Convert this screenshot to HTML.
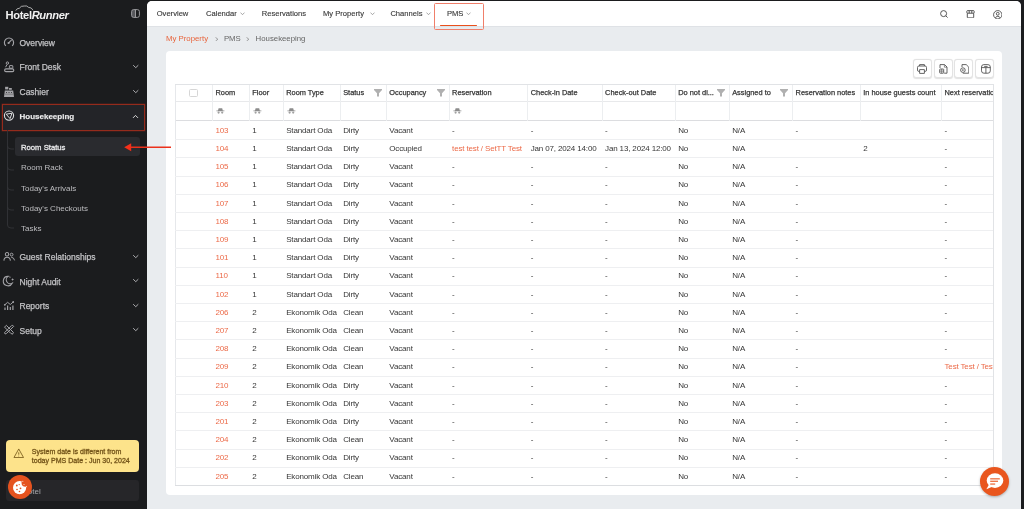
<!DOCTYPE html>
<html><head><meta charset="utf-8">
<style>
*{margin:0;padding:0;box-sizing:border-box}
html,body{width:1024px;height:509px;overflow:hidden;background:#1b1c1e;font-family:"Liberation Sans",sans-serif}
.abs{position:absolute}
body>*{will-change:transform}
#side{position:absolute;left:0;top:0;width:147px;height:509px;background:#1b1c1e}
#main{position:absolute;left:147px;top:1px;width:874px;height:520px;background:#e9ecef;border-radius:5px 5px 0 0;overflow:hidden}
#hdr{position:absolute;left:0;top:0;width:874px;height:25.5px;background:#fff;border-bottom:1px solid #dfe2e6}
.nav{position:absolute;top:7.5px;font-size:7.6px;color:#383838;-webkit-text-stroke:0.12px #383838;white-space:nowrap}
.chev{display:inline-block;width:3.2px;height:3.2px;border-right:0.6px solid #999;border-bottom:0.6px solid #999;transform:rotate(45deg);margin-left:4.5px;position:relative;top:-2px}
.bc{position:absolute;top:33px;font-size:7.8px;color:#666;white-space:nowrap}
#card{position:absolute;left:19px;top:50px;width:836px;height:444px;background:#fff;border-radius:4px}
.tb{position:absolute;top:8px;width:19px;height:18.5px;border:1px solid #e3e3e3;border-radius:3px;background:#fff;box-shadow:0 0.5px 1px rgba(0,0,0,.12)}
#tbl{position:absolute;left:174.8px;top:83.5px;width:819.2px;height:401.9px;overflow:hidden;background:#fff;border-top:1px solid #e1e3e6;border-right:1px solid #e1e3e6}
#tbl .hrow{position:absolute;left:0;top:0;width:100%;height:17.2px;border-bottom:1px solid #e8e9eb}
#tbl .frow{position:absolute;left:0;top:17.7px;width:100%;height:18.7px;border-bottom:1px solid #dcdde0}
#tbl .vl{position:absolute;top:0;width:1px;height:36.4px;background:#eceef0}
#tbl .vl.full{height:100%;background:#e6e8eb}
#tbl .c{position:absolute;white-space:nowrap;font-size:8px;letter-spacing:-0.15px;color:#363636}
#tbl .h{top:2.8px;color:#353535;font-size:7.4px;-webkit-text-stroke:0.25px #353535;letter-spacing:0}
#tbl .r{position:absolute;left:0;width:100%;border-bottom:1px solid #eeeff1}
#tbl .r .c{top:3.8px}
#tbl .r1 .c{top:4.6px}
#tbl .rl{border-bottom-color:#dcdee1}
.o{color:#ec6a48}
.fi{position:absolute;top:4.2px;width:8px;height:7.5px}
.eye{position:absolute;top:23.4px}
.cb{position:absolute;left:14.3px;top:3.8px;width:9px;height:8.5px;border:0.8px solid #d6d6d6;border-radius:1.5px}
.si{position:absolute;left:19.5px;font-size:8.5px;color:#c2c2c5;-webkit-text-stroke:0.25px #c2c2c5;white-space:nowrap}
.sic{position:absolute;left:4px;width:11px;height:11px}
.sch{position:absolute;left:133px;width:4px;height:4px;border-right:1px solid #bbb;border-bottom:1px solid #bbb;transform:rotate(45deg)}
.sub{position:absolute;left:21px;font-size:8px;color:#bdbdc0;white-space:nowrap}
</style></head><body>
<div id="side">
  <!-- logo -->
  <div class="abs" style="left:5.6px;top:9px;font-size:11.2px;font-weight:bold;color:#f2f2f2;letter-spacing:-0.38px;white-space:nowrap">Hotel<i>Runner</i></div>
  <svg class="abs" style="left:14.5px;top:5px" width="20" height="6" viewBox="0 0 20 6"><path d="M0.8 5.6Q1.8 3.2 4.3 3.3Q5.8 0.6 9.3 1Q12 0.3 13.6 2.4Q16.6 2.2 18 5.2" fill="none" stroke="#d8d8d8" stroke-width="0.75"/></svg>
  <!-- collapse icon -->
  <svg class="abs" style="left:131px;top:9px" width="9" height="9" viewBox="0 0 9 9"><path d="M4.5 0.6H2.6Q0.6 0.6 0.6 2.6V6.4Q0.6 8.4 2.6 8.4H4.5Z" fill="#56575b"/><rect x="0.6" y="0.6" width="7.8" height="7.8" rx="2" fill="none" stroke="#9a9a9d" stroke-width="1"/><line x1="4.5" y1="0.6" x2="4.5" y2="8.4" stroke="#9a9a9d" stroke-width="1"/></svg>

  <div class="si" style="top:37.5px">Overview</div>
  <svg class="abs" style="left:0;top:34px" width="20" height="20" viewBox="0 0 20 20"><path d="M5.8 11.9A4.6 4.6 0 1 1 12.2 11.9" fill="none" stroke="#a3a3a7" stroke-width="1.15"/><path d="M8.7 8.9L11.6 5.9" stroke="#a3a3a7" stroke-width="1.1"/><circle cx="8.6" cy="9" r="1.1" fill="#a3a3a7"/></svg>

  <div class="si" style="top:62.2px">Front Desk</div>
  <svg class="abs" style="left:0;top:58px" width="20" height="20" viewBox="0 0 20 20"><circle cx="7.4" cy="5.1" r="1.2" fill="none" stroke="#a3a3a7" stroke-width="1"/><path d="M7 6.6L5.6 9.2" stroke="#a3a3a7" stroke-width="1"/><rect x="9.4" y="7.6" width="3.4" height="2.6" rx="0.4" fill="none" stroke="#a3a3a7" stroke-width="1"/><rect x="4.6" y="10.9" width="9.2" height="2.7" rx="1.35" fill="none" stroke="#a3a3a7" stroke-width="1.1"/></svg>
  <svg class="abs" style="left:132px;top:63.8px" width="8" height="5" viewBox="0 0 8 5"><path d="M1.2 1.2L3.75 3.7L6.3 1.2" fill="none" stroke="#b5b5b8" stroke-width="0.95"/></svg>

  <div class="si" style="top:86.9px">Cashier</div>
  <svg class="abs" style="left:0;top:82px" width="20" height="20" viewBox="0 0 20 20"><rect x="5.1" y="4.8" width="3.2" height="2.6" fill="#a3a3a7"/><rect x="9" y="6" width="2.8" height="1.8" fill="#a3a3a7"/><path d="M4.8 8.6H13.2L14 15H4z" fill="#a3a3a7"/><circle cx="6.5" cy="10.4" r="0.5" fill="#1c1c1f"/><circle cx="9" cy="10.4" r="0.5" fill="#1c1c1f"/><circle cx="11.5" cy="10.4" r="0.5" fill="#1c1c1f"/><path d="M5 12.2H13" stroke="#555" stroke-width="0.5"/></svg>
  <svg class="abs" style="left:132px;top:88.8px" width="8" height="5" viewBox="0 0 8 5"><path d="M1.2 1.2L3.75 3.7L6.3 1.2" fill="none" stroke="#b5b5b8" stroke-width="0.95"/></svg>

  <!-- housekeeping highlighted -->
  <div class="abs" style="left:2px;top:104px;width:143px;height:27px;border:1px solid #952b1c;box-shadow:0 0 0 0.4px rgba(149,43,28,.55);background:#232428;border-radius:0"></div>
  <div class="si" style="top:111.5px;color:#fafafa;font-weight:bold;font-size:8px">Housekeeping</div>
  <svg class="abs" style="left:0;top:106px" width="20" height="20" viewBox="0 0 20 20"><circle cx="9" cy="9.6" r="4.6" fill="none" stroke="#dcdcde" stroke-width="1.1"/><path d="M6.2 8.2L12 7.2L10 12.6Z" fill="none" stroke="#dcdcde" stroke-width="1"/></svg>
  <svg class="abs" style="left:132px;top:113.5px" width="8" height="5" viewBox="0 0 8 5"><path d="M1 3.9L3.5 1.4L6 3.9" fill="none" stroke="#e0e0e0" stroke-width="0.95"/></svg>

  <!-- tree line -->
  <svg class="abs" style="left:0;top:130px" width="20" height="100" viewBox="0 0 20 100"><path d="M7.5 0V95Q7.5 98 11 98H14M7.5 16Q7.5 19 11 19H14M7.5 37Q7.5 40 11 40H14M7.5 57Q7.5 60 11 60H14M7.5 77Q7.5 80 11 80H14" fill="none" stroke="#333438" stroke-width="0.9"/></svg>
  <div class="abs" style="left:14.7px;top:137.1px;width:125.3px;height:19px;background:#2a2b2f;border-radius:3px"></div>
  <div class="sub" style="top:143px;color:#e6e6e8;font-size:7.7px;-webkit-text-stroke:0.32px #e6e6e8">Room Status</div>
  <div class="sub" style="top:163.4px">Room Rack</div>
  <div class="sub" style="top:183.5px">Today's Arrivals</div>
  <div class="sub" style="top:203.6px">Today's Checkouts</div>
  <div class="sub" style="top:224.1px">Tasks</div>

  <div class="si" style="top:252.2px">Guest Relationships</div>
  <svg class="abs" style="left:0;top:246px" width="20" height="20" viewBox="0 0 20 20"><circle cx="7" cy="8.2" r="1.7" fill="none" stroke="#a3a3a7" stroke-width="1.05"/><circle cx="11.6" cy="8.6" r="1.4" fill="none" stroke="#a3a3a7" stroke-width="1"/><path d="M3.9 14.6Q4.1 11.3 7.1 11.3Q10.1 11.3 10.4 14.6" fill="none" stroke="#a3a3a7" stroke-width="1.1"/><path d="M11.2 11.2Q14 11.4 14.6 14.4" fill="none" stroke="#a3a3a7" stroke-width="1"/></svg>
  <svg class="abs" style="left:132px;top:253.8px" width="8" height="5" viewBox="0 0 8 5"><path d="M1.2 1.2L3.75 3.7L6.3 1.2" fill="none" stroke="#b5b5b8" stroke-width="0.95"/></svg>

  <div class="si" style="top:277px">Night Audit</div>
  <svg class="abs" style="left:0;top:271px" width="20" height="20" viewBox="0 0 20 20"><path d="M8.2 5.4A4.7 4.7 0 1 0 12.2 12.2A3.9 3.9 0 0 1 8.2 5.4Z" fill="none" stroke="#a3a3a7" stroke-width="1.1"/><path d="M12.6 7L13 8.1L14.1 8.5L13 8.9L12.6 10L12.2 8.9L11.1 8.5L12.2 8.1Z" fill="#a3a3a7"/><circle cx="10" cy="6.2" r="0.6" fill="#a3a3a7"/></svg>
  <svg class="abs" style="left:132px;top:278.3px" width="8" height="5" viewBox="0 0 8 5"><path d="M1.2 1.2L3.75 3.7L6.3 1.2" fill="none" stroke="#b5b5b8" stroke-width="0.95"/></svg>

  <div class="si" style="top:301.3px">Reports</div>
  <svg class="abs" style="left:0;top:296px" width="20" height="20" viewBox="0 0 20 20"><path d="M4.8 8.8L7.6 6.3L10.3 8.5L13.2 6" fill="none" stroke="#a3a3a7" stroke-width="1"/><circle cx="4.8" cy="8.8" r="0.9" fill="#a3a3a7"/><circle cx="13.2" cy="6" r="0.9" fill="#a3a3a7"/><path d="M5 11.5V14M7.6 9.6V14M10.3 11V14M12.9 9.6V14" stroke="#a3a3a7" stroke-width="1.2"/></svg>
  <svg class="abs" style="left:132px;top:302.8px" width="8" height="5" viewBox="0 0 8 5"><path d="M1.2 1.2L3.75 3.7L6.3 1.2" fill="none" stroke="#b5b5b8" stroke-width="0.95"/></svg>

  <div class="si" style="top:326.1px">Setup</div>
  <svg class="abs" style="left:0;top:320px" width="20" height="20" viewBox="0 0 20 20"><path d="M5.4 6.2L6.3 5.3L13.4 12.4L12.5 14.2L10.7 13.3L4.5 7.1Z" fill="none" stroke="#a3a3a7" stroke-width="1"/><path d="M12.8 5.4L13.7 6.3L6.6 13.4L5.2 14L4.6 12.6L11.8 5.4Z" fill="none" stroke="#a3a3a7" stroke-width="1"/></svg>
  <svg class="abs" style="left:132px;top:327.3px" width="8" height="5" viewBox="0 0 8 5"><path d="M1.2 1.2L3.75 3.7L6.3 1.2" fill="none" stroke="#b5b5b8" stroke-width="0.95"/></svg>

  <!-- warning -->
  <div class="abs" style="left:5.9px;top:440.1px;width:132.8px;height:31.5px;background:#fde38b;border-radius:4px"></div>
  <svg class="abs" style="left:13px;top:447.5px" width="11.5" height="10.5" viewBox="0 0 12 11"><path d="M6 1L11 10H1z" fill="none" stroke="#7a5c1c" stroke-width="0.9" stroke-linejoin="round"/><path d="M6 4.5v2.5" stroke="#7a5c1c" stroke-width="0.9"/><circle cx="6" cy="8.4" r="0.5" fill="#7a5c1c"/></svg>
  <div class="abs" style="left:31.8px;top:448px;font-size:7.05px;color:#74551a;-webkit-text-stroke:0.3px #74551a;line-height:8.6px;white-space:nowrap">System date is different from<br>today PMS Date : Jun 30, 2024</div>

  <!-- bottom hotel box -->
  <div class="abs" style="left:5.9px;top:480px;width:132.8px;height:21.4px;background:#262629;border-radius:3px"></div>
  <div class="abs" style="left:22px;top:487px;font-size:8px;color:#a9a9ac">Hotel</div>
  <div class="abs" style="left:8.1px;top:475px;width:24px;height:24px;border-radius:50%;background:#e5531f"></div>
  <svg class="abs" style="left:12px;top:480px" width="16" height="16" viewBox="0 0 16 16"><defs><mask id="bite"><rect width="16" height="16" fill="#fff"/><circle cx="13.5" cy="2.8" r="4" fill="#000"/></mask></defs><circle cx="7.6" cy="7.6" r="6.6" fill="#fff" mask="url(#bite)"/><circle cx="4.8" cy="5.5" r="0.9" fill="#e5531f"/><circle cx="7.2" cy="4.6" r="0.7" fill="#e5531f"/><circle cx="8.5" cy="8.3" r="0.9" fill="#e5531f"/><circle cx="5" cy="9.5" r="0.8" fill="#e5531f"/><circle cx="7.5" cy="11.5" r="0.8" fill="#e5531f"/><circle cx="10.8" cy="1.2" r="0.5" fill="#fff"/><circle cx="12" cy="4.4" r="0.5" fill="#fff"/><circle cx="14.3" cy="6.5" r="0.5" fill="#fff"/></svg>
</div>

<div id="main">
  <div id="hdr">
    <div class="nav" style="left:9.7px">Overview</div>
    <div class="nav" style="left:59px">Calendar</div>
    <div class="nav" style="left:114.8px">Reservations</div>
    <div class="nav" style="left:176px">My Property</div>
    <div class="nav" style="left:243.4px">Channels</div>
    <div class="abs" style="left:287.4px;top:1.9px;width:49.4px;height:27.6px;border:1px solid #f07f6a;border-radius:1.5px"></div>
    <div class="nav" style="left:299.9px">PMS</div>
    <div class="abs" style="left:293px;top:23.7px;width:36.6px;height:1.5px;background:#e9501c;border-radius:1px"></div>
    <svg class="abs" style="left:93.3px;top:10.9px" width="5" height="3.5" viewBox="0 0 5 3.5"><path d="M0.5 0.6L2.5 2.7L4.5 0.6" stroke="#8a8a8a" stroke-width="0.75" fill="none"/></svg>
    <svg class="abs" style="left:222.6px;top:10.9px" width="5" height="3.5" viewBox="0 0 5 3.5"><path d="M0.5 0.6L2.5 2.7L4.5 0.6" stroke="#8a8a8a" stroke-width="0.75" fill="none"/></svg>
    <svg class="abs" style="left:279px;top:10.9px" width="5" height="3.5" viewBox="0 0 5 3.5"><path d="M0.5 0.6L2.5 2.7L4.5 0.6" stroke="#8a8a8a" stroke-width="0.75" fill="none"/></svg>
    <svg class="abs" style="left:319.4px;top:10.9px" width="5" height="3.5" viewBox="0 0 5 3.5"><path d="M0.5 0.6L2.5 2.7L4.5 0.6" stroke="#8a8a8a" stroke-width="0.75" fill="none"/></svg>
    <!-- right icons -->
    <svg class="abs" style="left:792.5px;top:9px" width="8" height="8" viewBox="0 0 8 8"><circle cx="3.6" cy="3.6" r="3" fill="none" stroke="#444" stroke-width="0.9"/><path d="M5.8 5.8L7.6 7.6" stroke="#444" stroke-width="0.9"/></svg>
    <svg class="abs" style="left:819px;top:8.8px" width="9" height="8.5" viewBox="0 0 9 8.5"><rect x="0.8" y="0.6" width="7.4" height="2.6" rx="0.8" fill="none" stroke="#444" stroke-width="0.9"/><path d="M1.3 3.2V7.2Q1.3 7.9 2 7.9H7Q7.7 7.9 7.7 7.2V3.2M3.2 1v2.2M5.8 1v2.2" fill="none" stroke="#444" stroke-width="0.9"/></svg>
    <svg class="abs" style="left:845.8px;top:8.6px" width="9.5" height="9.5" viewBox="0 0 10 10"><circle cx="5" cy="5" r="4.4" fill="none" stroke="#444" stroke-width="0.9"/><circle cx="5" cy="4" r="1.5" fill="none" stroke="#444" stroke-width="0.9"/><path d="M2.6 8.3Q3 6.7 5 6.7T7.4 8.3" fill="none" stroke="#444" stroke-width="0.9"/></svg>
  </div>
  <div class="bc" style="left:19px;color:#e8643c">My Property</div>
  <svg class="abs" style="left:67.6px;top:35.8px" width="3.5" height="4.5" viewBox="0 0 3.5 4.5"><path d="M0.5 0.4L2.9 2.25L0.5 4.1" stroke="#8c8c8c" stroke-width="0.8" fill="none"/></svg>
  <div class="bc" style="left:76.9px">PMS</div>
  <svg class="abs" style="left:99px;top:35.8px" width="3.5" height="4.5" viewBox="0 0 3.5 4.5"><path d="M0.5 0.4L2.9 2.25L0.5 4.1" stroke="#8c8c8c" stroke-width="0.8" fill="none"/></svg>
  <div class="bc" style="left:108.6px">Housekeeping</div>
  <div id="card">
    <div class="tb" style="left:746.8px"><svg class="abs" style="left:3.6px;top:3.6px" width="10" height="10" viewBox="0 0 10 10"><path d="M2.6 2V0.6h4.8V2" fill="none" stroke="#4a4a4a" stroke-width="0.85"/><path d="M2.4 7.4H1.8Q0.5 7.4 0.5 6.1V3.4Q0.5 2 1.9 2H8.1Q9.5 2 9.5 3.4V6.1Q9.5 7.4 8.2 7.4H7.6" fill="none" stroke="#4a4a4a" stroke-width="0.85"/><path d="M2.6 5.6h4.8v3.8h-4.8z" fill="none" stroke="#4a4a4a" stroke-width="0.85"/></svg></div>
    <div class="tb" style="left:767.6px"><svg class="abs" style="left:4.3px;top:4px" width="9" height="10" viewBox="0 0 9 10"><path d="M1 4V0.6h4.6L8 3V9.2H5.2" fill="none" stroke="#4a4a4a" stroke-width="0.85"/><path d="M5.4 0.8V3.2H8" fill="none" stroke="#4a4a4a" stroke-width="0.6"/><rect x="0.7" y="5" width="4" height="4.2" rx="0.6" fill="none" stroke="#4a4a4a" stroke-width="0.85"/><path d="M2.7 5v4.2M0.7 7.1h4" stroke="#4a4a4a" stroke-width="0.6"/></svg></div>
    <div class="tb" style="left:788.3px"><svg class="abs" style="left:4.4px;top:4px" width="9.5" height="10" viewBox="0 0 9.5 10"><path d="M2 3V0.6h4.2L8.8 3.2V9.2H2.8" fill="none" stroke="#4a4a4a" stroke-width="0.85"/><circle cx="2.9" cy="6.1" r="2.3" fill="#fff" stroke="#4a4a4a" stroke-width="0.85"/><circle cx="2.9" cy="6.1" r="0.8" fill="#4a4a4a"/></svg></div>
    <div class="tb" style="left:809.3px"><svg class="abs" style="left:4.3px;top:4px" width="10" height="10" viewBox="0 0 10 10"><rect x="0.5" y="0.6" width="8.8" height="8.6" rx="2.4" fill="none" stroke="#4a4a4a" stroke-width="0.85"/><path d="M0.5 3.6h8.8M4.9 3.6v5.6M3.2 2.4h3.4" fill="none" stroke="#4a4a4a" stroke-width="0.85"/></svg></div>
  </div>
</div>

<div id="tbl">
  <div class="hrow"></div>
  <div class="frow"></div>
  <div class="vl full" style="left:0.0px"></div><div class="vl" style="left:37.0px"></div><div class="vl" style="left:73.8px"></div><div class="vl" style="left:107.7px"></div><div class="vl" style="left:164.7px"></div><div class="vl" style="left:210.8px"></div><div class="vl" style="left:273.6px"></div><div class="vl" style="left:352.2px"></div><div class="vl" style="left:426.6px"></div><div class="vl" style="left:499.7px"></div><div class="vl" style="left:553.7px"></div><div class="vl" style="left:617.1px"></div><div class="vl" style="left:684.7px"></div><div class="vl" style="left:766.0px"></div>
  <div class="cb"></div>
  <div class="c h" style="left:40.5px">Room</div><div class="c h" style="left:77.3px">Floor</div><div class="c h" style="left:111.2px">Room Type</div><div class="c h" style="left:168.2px">Status</div><svg class="fi" style="left:198.8px" viewBox="0 0 8 7.5"><path d="M0 0H8V1L5 4.2V7.5H3V4.2L0 1Z" fill="#b0b0b0"/></svg><div class="c h" style="left:214.3px">Occupancy</div><svg class="fi" style="left:261.6px" viewBox="0 0 8 7.5"><path d="M0 0H8V1L5 4.2V7.5H3V4.2L0 1Z" fill="#b0b0b0"/></svg><div class="c h" style="left:277.1px">Reservation</div><div class="c h" style="left:355.7px">Check-in Date</div><div class="c h" style="left:430.1px">Check-out Date</div><div class="c h" style="left:503.2px">Do not di...</div><svg class="fi" style="left:541.7px" viewBox="0 0 8 7.5"><path d="M0 0H8V1L5 4.2V7.5H3V4.2L0 1Z" fill="#b0b0b0"/></svg><div class="c h" style="left:557.2px">Assigned to</div><svg class="fi" style="left:605.1px" viewBox="0 0 8 7.5"><path d="M0 0H8V1L5 4.2V7.5H3V4.2L0 1Z" fill="#b0b0b0"/></svg><div class="c h" style="left:620.6px">Reservation notes</div><div class="c h" style="left:688.2px">In house guests count</div><div class="c h" style="left:769.5px">Next reservatio</div>
  <div class="eye" style="left:41.2px"><svg style="display:block" width="9" height="6" viewBox="0 0 9 6"><path d="M2.6 0.3H6.2L6.8 2.4H8.4V3.2H0.4V2.4H2Z" fill="#8c8c8c"/><circle cx="2.6" cy="4.6" r="1.1" fill="#a0a0a0"/><circle cx="6.2" cy="4.6" r="1.1" fill="#a0a0a0"/></svg></div><div class="eye" style="left:78.0px"><svg style="display:block" width="9" height="6" viewBox="0 0 9 6"><path d="M2.6 0.3H6.2L6.8 2.4H8.4V3.2H0.4V2.4H2Z" fill="#8c8c8c"/><circle cx="2.6" cy="4.6" r="1.1" fill="#a0a0a0"/><circle cx="6.2" cy="4.6" r="1.1" fill="#a0a0a0"/></svg></div><div class="eye" style="left:111.9px"><svg style="display:block" width="9" height="6" viewBox="0 0 9 6"><path d="M2.6 0.3H6.2L6.8 2.4H8.4V3.2H0.4V2.4H2Z" fill="#8c8c8c"/><circle cx="2.6" cy="4.6" r="1.1" fill="#a0a0a0"/><circle cx="6.2" cy="4.6" r="1.1" fill="#a0a0a0"/></svg></div><div class="eye" style="left:277.8px"><svg style="display:block" width="9" height="6" viewBox="0 0 9 6"><path d="M2.6 0.3H6.2L6.8 2.4H8.4V3.2H0.4V2.4H2Z" fill="#8c8c8c"/><circle cx="2.6" cy="4.6" r="1.1" fill="#a0a0a0"/><circle cx="6.2" cy="4.6" r="1.1" fill="#a0a0a0"/></svg></div>
  <div class="r r1" style="top:36.20px;height:19.00px"><div class="c " style="left:40.5px"><span class="o">103</span></div><div class="c " style="left:77.3px">1</div><div class="c " style="left:111.2px">Standart Oda</div><div class="c " style="left:168.2px">Dirty</div><div class="c " style="left:214.3px">Vacant</div><div class="c " style="left:277.1px">-</div><div class="c " style="left:355.7px">-</div><div class="c " style="left:430.1px">-</div><div class="c " style="left:503.2px">No</div><div class="c " style="left:557.2px">N/A</div><div class="c " style="left:620.6px">-</div><div class="c " style="left:769.5px">-</div></div><div class="r" style="top:55.20px;height:18.21px"><div class="c " style="left:40.5px"><span class="o">104</span></div><div class="c " style="left:77.3px">1</div><div class="c " style="left:111.2px">Standart Oda</div><div class="c " style="left:168.2px">Dirty</div><div class="c " style="left:214.3px">Occupied</div><div class="c " style="left:277.1px"><span class="o">test test / SetTT Test</span></div><div class="c " style="left:355.7px">Jan 07, 2024 14:00</div><div class="c " style="left:430.1px">Jan 13, 2024 12:00</div><div class="c " style="left:503.2px">No</div><div class="c " style="left:557.2px">N/A</div><div class="c " style="left:688.2px">2</div><div class="c " style="left:769.5px">-</div></div><div class="r" style="top:73.41px;height:18.21px"><div class="c " style="left:40.5px"><span class="o">105</span></div><div class="c " style="left:77.3px">1</div><div class="c " style="left:111.2px">Standart Oda</div><div class="c " style="left:168.2px">Dirty</div><div class="c " style="left:214.3px">Vacant</div><div class="c " style="left:277.1px">-</div><div class="c " style="left:355.7px">-</div><div class="c " style="left:430.1px">-</div><div class="c " style="left:503.2px">No</div><div class="c " style="left:557.2px">N/A</div><div class="c " style="left:620.6px">-</div><div class="c " style="left:769.5px">-</div></div><div class="r" style="top:91.61px;height:18.21px"><div class="c " style="left:40.5px"><span class="o">106</span></div><div class="c " style="left:77.3px">1</div><div class="c " style="left:111.2px">Standart Oda</div><div class="c " style="left:168.2px">Dirty</div><div class="c " style="left:214.3px">Vacant</div><div class="c " style="left:277.1px">-</div><div class="c " style="left:355.7px">-</div><div class="c " style="left:430.1px">-</div><div class="c " style="left:503.2px">No</div><div class="c " style="left:557.2px">N/A</div><div class="c " style="left:620.6px">-</div><div class="c " style="left:769.5px">-</div></div><div class="r" style="top:109.82px;height:18.21px"><div class="c " style="left:40.5px"><span class="o">107</span></div><div class="c " style="left:77.3px">1</div><div class="c " style="left:111.2px">Standart Oda</div><div class="c " style="left:168.2px">Dirty</div><div class="c " style="left:214.3px">Vacant</div><div class="c " style="left:277.1px">-</div><div class="c " style="left:355.7px">-</div><div class="c " style="left:430.1px">-</div><div class="c " style="left:503.2px">No</div><div class="c " style="left:557.2px">N/A</div><div class="c " style="left:620.6px">-</div><div class="c " style="left:769.5px">-</div></div><div class="r" style="top:128.02px;height:18.21px"><div class="c " style="left:40.5px"><span class="o">108</span></div><div class="c " style="left:77.3px">1</div><div class="c " style="left:111.2px">Standart Oda</div><div class="c " style="left:168.2px">Dirty</div><div class="c " style="left:214.3px">Vacant</div><div class="c " style="left:277.1px">-</div><div class="c " style="left:355.7px">-</div><div class="c " style="left:430.1px">-</div><div class="c " style="left:503.2px">No</div><div class="c " style="left:557.2px">N/A</div><div class="c " style="left:620.6px">-</div><div class="c " style="left:769.5px">-</div></div><div class="r" style="top:146.23px;height:18.21px"><div class="c " style="left:40.5px"><span class="o">109</span></div><div class="c " style="left:77.3px">1</div><div class="c " style="left:111.2px">Standart Oda</div><div class="c " style="left:168.2px">Dirty</div><div class="c " style="left:214.3px">Vacant</div><div class="c " style="left:277.1px">-</div><div class="c " style="left:355.7px">-</div><div class="c " style="left:430.1px">-</div><div class="c " style="left:503.2px">No</div><div class="c " style="left:557.2px">N/A</div><div class="c " style="left:620.6px">-</div><div class="c " style="left:769.5px">-</div></div><div class="r" style="top:164.44px;height:18.21px"><div class="c " style="left:40.5px"><span class="o">101</span></div><div class="c " style="left:77.3px">1</div><div class="c " style="left:111.2px">Standart Oda</div><div class="c " style="left:168.2px">Dirty</div><div class="c " style="left:214.3px">Vacant</div><div class="c " style="left:277.1px">-</div><div class="c " style="left:355.7px">-</div><div class="c " style="left:430.1px">-</div><div class="c " style="left:503.2px">No</div><div class="c " style="left:557.2px">N/A</div><div class="c " style="left:620.6px">-</div><div class="c " style="left:769.5px">-</div></div><div class="r" style="top:182.64px;height:18.21px"><div class="c " style="left:40.5px"><span class="o">110</span></div><div class="c " style="left:77.3px">1</div><div class="c " style="left:111.2px">Standart Oda</div><div class="c " style="left:168.2px">Dirty</div><div class="c " style="left:214.3px">Vacant</div><div class="c " style="left:277.1px">-</div><div class="c " style="left:355.7px">-</div><div class="c " style="left:430.1px">-</div><div class="c " style="left:503.2px">No</div><div class="c " style="left:557.2px">N/A</div><div class="c " style="left:620.6px">-</div><div class="c " style="left:769.5px">-</div></div><div class="r" style="top:200.85px;height:18.21px"><div class="c " style="left:40.5px"><span class="o">102</span></div><div class="c " style="left:77.3px">1</div><div class="c " style="left:111.2px">Standart Oda</div><div class="c " style="left:168.2px">Dirty</div><div class="c " style="left:214.3px">Vacant</div><div class="c " style="left:277.1px">-</div><div class="c " style="left:355.7px">-</div><div class="c " style="left:430.1px">-</div><div class="c " style="left:503.2px">No</div><div class="c " style="left:557.2px">N/A</div><div class="c " style="left:620.6px">-</div><div class="c " style="left:769.5px">-</div></div><div class="r" style="top:219.05px;height:18.21px"><div class="c " style="left:40.5px"><span class="o">206</span></div><div class="c " style="left:77.3px">2</div><div class="c " style="left:111.2px">Ekonomik Oda</div><div class="c " style="left:168.2px">Clean</div><div class="c " style="left:214.3px">Vacant</div><div class="c " style="left:277.1px">-</div><div class="c " style="left:355.7px">-</div><div class="c " style="left:430.1px">-</div><div class="c " style="left:503.2px">No</div><div class="c " style="left:557.2px">N/A</div><div class="c " style="left:620.6px">-</div><div class="c " style="left:769.5px">-</div></div><div class="r" style="top:237.26px;height:18.21px"><div class="c " style="left:40.5px"><span class="o">207</span></div><div class="c " style="left:77.3px">2</div><div class="c " style="left:111.2px">Ekonomik Oda</div><div class="c " style="left:168.2px">Clean</div><div class="c " style="left:214.3px">Vacant</div><div class="c " style="left:277.1px">-</div><div class="c " style="left:355.7px">-</div><div class="c " style="left:430.1px">-</div><div class="c " style="left:503.2px">No</div><div class="c " style="left:557.2px">N/A</div><div class="c " style="left:620.6px">-</div><div class="c " style="left:769.5px">-</div></div><div class="r" style="top:255.47px;height:18.21px"><div class="c " style="left:40.5px"><span class="o">208</span></div><div class="c " style="left:77.3px">2</div><div class="c " style="left:111.2px">Ekonomik Oda</div><div class="c " style="left:168.2px">Clean</div><div class="c " style="left:214.3px">Vacant</div><div class="c " style="left:277.1px">-</div><div class="c " style="left:355.7px">-</div><div class="c " style="left:430.1px">-</div><div class="c " style="left:503.2px">No</div><div class="c " style="left:557.2px">N/A</div><div class="c " style="left:620.6px">-</div><div class="c " style="left:769.5px">-</div></div><div class="r" style="top:273.67px;height:18.21px"><div class="c " style="left:40.5px"><span class="o">209</span></div><div class="c " style="left:77.3px">2</div><div class="c " style="left:111.2px">Ekonomik Oda</div><div class="c " style="left:168.2px">Clean</div><div class="c " style="left:214.3px">Vacant</div><div class="c " style="left:277.1px">-</div><div class="c " style="left:355.7px">-</div><div class="c " style="left:430.1px">-</div><div class="c " style="left:503.2px">No</div><div class="c " style="left:557.2px">N/A</div><div class="c " style="left:620.6px">-</div><div class="c " style="left:769.5px"><span class="o">Test Test / Test</span></div></div><div class="r" style="top:291.88px;height:18.21px"><div class="c " style="left:40.5px"><span class="o">210</span></div><div class="c " style="left:77.3px">2</div><div class="c " style="left:111.2px">Ekonomik Oda</div><div class="c " style="left:168.2px">Dirty</div><div class="c " style="left:214.3px">Vacant</div><div class="c " style="left:277.1px">-</div><div class="c " style="left:355.7px">-</div><div class="c " style="left:430.1px">-</div><div class="c " style="left:503.2px">No</div><div class="c " style="left:557.2px">N/A</div><div class="c " style="left:620.6px">-</div><div class="c " style="left:769.5px">-</div></div><div class="r" style="top:310.08px;height:18.21px"><div class="c " style="left:40.5px"><span class="o">203</span></div><div class="c " style="left:77.3px">2</div><div class="c " style="left:111.2px">Ekonomik Oda</div><div class="c " style="left:168.2px">Dirty</div><div class="c " style="left:214.3px">Vacant</div><div class="c " style="left:277.1px">-</div><div class="c " style="left:355.7px">-</div><div class="c " style="left:430.1px">-</div><div class="c " style="left:503.2px">No</div><div class="c " style="left:557.2px">N/A</div><div class="c " style="left:620.6px">-</div><div class="c " style="left:769.5px">-</div></div><div class="r" style="top:328.29px;height:18.21px"><div class="c " style="left:40.5px"><span class="o">201</span></div><div class="c " style="left:77.3px">2</div><div class="c " style="left:111.2px">Ekonomik Oda</div><div class="c " style="left:168.2px">Dirty</div><div class="c " style="left:214.3px">Vacant</div><div class="c " style="left:277.1px">-</div><div class="c " style="left:355.7px">-</div><div class="c " style="left:430.1px">-</div><div class="c " style="left:503.2px">No</div><div class="c " style="left:557.2px">N/A</div><div class="c " style="left:620.6px">-</div><div class="c " style="left:769.5px">-</div></div><div class="r" style="top:346.50px;height:18.21px"><div class="c " style="left:40.5px"><span class="o">204</span></div><div class="c " style="left:77.3px">2</div><div class="c " style="left:111.2px">Ekonomik Oda</div><div class="c " style="left:168.2px">Clean</div><div class="c " style="left:214.3px">Vacant</div><div class="c " style="left:277.1px">-</div><div class="c " style="left:355.7px">-</div><div class="c " style="left:430.1px">-</div><div class="c " style="left:503.2px">No</div><div class="c " style="left:557.2px">N/A</div><div class="c " style="left:620.6px">-</div><div class="c " style="left:769.5px">-</div></div><div class="r" style="top:364.70px;height:18.21px"><div class="c " style="left:40.5px"><span class="o">202</span></div><div class="c " style="left:77.3px">2</div><div class="c " style="left:111.2px">Ekonomik Oda</div><div class="c " style="left:168.2px">Dirty</div><div class="c " style="left:214.3px">Vacant</div><div class="c " style="left:277.1px">-</div><div class="c " style="left:355.7px">-</div><div class="c " style="left:430.1px">-</div><div class="c " style="left:503.2px">No</div><div class="c " style="left:557.2px">N/A</div><div class="c " style="left:620.6px">-</div><div class="c " style="left:769.5px">-</div></div><div class="r rl" style="top:382.91px;height:18.59px"><div class="c " style="left:40.5px"><span class="o">205</span></div><div class="c " style="left:77.3px">2</div><div class="c " style="left:111.2px">Ekonomik Oda</div><div class="c " style="left:168.2px">Clean</div><div class="c " style="left:214.3px">Vacant</div><div class="c " style="left:277.1px">-</div><div class="c " style="left:355.7px">-</div><div class="c " style="left:430.1px">-</div><div class="c " style="left:503.2px">No</div><div class="c " style="left:557.2px">N/A</div><div class="c " style="left:620.6px">-</div><div class="c " style="left:769.5px">-</div></div>
</div>
  <!-- chat button -->
<div class="abs" style="left:980px;top:466.8px;width:29.4px;height:29.4px;border-radius:50%;background:#e9561e;box-shadow:0 1px 2.5px rgba(0,0,0,.28)"></div>
<svg class="abs" style="left:978px;top:465px" width="34" height="34" viewBox="0 0 34 34"><ellipse cx="17" cy="15.6" rx="8.3" ry="7.3" fill="#fff"/><path d="M11 19.5L8.4 24.2L14.8 21.6z" fill="#fff"/><rect x="12.2" y="13.3" width="9.6" height="1.1" fill="#e9561e"/><rect x="12.2" y="15.7" width="7.8" height="1.1" fill="#e9561e"/><rect x="12.2" y="18.5" width="5" height="1.1" fill="#e9561e"/></svg>
<!-- arrow annotation -->
<svg class="abs" style="left:120px;top:140px" width="60" height="14" viewBox="0 0 60 14"><path d="M10 7.2H51" stroke="#ec311b" stroke-width="1.5"/><path d="M4.2 7.2L11.2 3.2V11.2z" fill="#f5301a"/></svg>
</body></html>
